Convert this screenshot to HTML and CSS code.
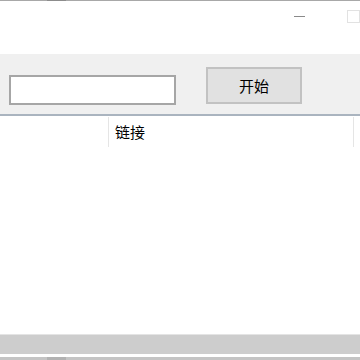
FILE: index.html
```html
<!DOCTYPE html>
<html>
<head>
  <title>链接</title>
  <meta name="viewport" content="width=device-width, initial-scale=1.0">
  <link rel="stylesheet" href="styles.css">
</head>
<body>
  <div class="edge-bar">
    <div class="edge-thumb"></div>
  </div>

  <div class="titlebar">
    <div class="win-min"></div>
    <div class="win-max"></div>
  </div>

  <div class="toolbar">
    <input type="text" class="url-input">
    <button class="start-btn">开始</button>
  </div>

  <div class="list">
    <div class="list-header">
      <div class="col col-first"></div>
      <div class="col col-link">链接</div>
      <div class="col col-last"></div>
    </div>
    <div class="list-body"></div>
  </div>

  <div class="hscroll"></div>
  <div class="gap"></div>
  <div class="edge-bar bottom">
    <div class="edge-thumb"></div>
  </div>
</body>
</html>
```

FILE: styles.css
```css
html, body {
  margin: 0;
  padding: 0;
}

body {
  width: 360px;
  height: 360px;
  overflow: hidden;
  background: #ffffff;
  color: #000000;
  font-family: 'Noto Sans CJK SC', 'Noto Sans', sans-serif;
  display: flex;
  flex-direction: column;
}

.edge-bar {
  height: 1px;
  background: #a8a8a8;
  flex-shrink: 0;
}

.edge-thumb {
  margin-left: 47px;
  width: 19px;
  height: 100%;
  background: #8c8c8c;
}

.edge-bar.bottom {
  height: 3px;
  background: #c4c4c4;
}

.edge-bar.bottom .edge-thumb {
  background: #b2b2b2;
}

.titlebar {
  height: 53px;
  flex-shrink: 0;
  display: flex;
  align-items: flex-start;
}

.win-min {
  margin-left: 294px;
  margin-top: 15px;
  width: 13px;
  height: 1px;
  background: #8a8a8a;
}

.win-max {
  margin-left: 42px;
  margin-top: 9px;
  width: 11px;
  height: 11px;
  border: 1px solid #e2e2e2;
  flex-shrink: 0;
}

.toolbar {
  height: 60px;
  flex-shrink: 0;
  background: #f0f0f0;
  display: flex;
  align-items: flex-start;
}

.url-input {
  box-sizing: border-box;
  margin: 21px 0 0 9px;
  width: 167px;
  height: 30px;
  border: 2px solid #a6a6a6;
  background: #ffffff;
  padding: 0;
  outline: none;
}

.start-btn {
  box-sizing: border-box;
  margin: 13px 0 0 30px;
  width: 96px;
  height: 37px;
  background: #e1e1e1;
  border: 2px solid #c2c2c2;
  border-radius: 0;
  font-family: inherit;
  font-size: 15px;
  color: #000000;
  padding: 0;
}

.list {
  flex: 1;
  display: flex;
  flex-direction: column;
  border-top: 2px solid #aab4bf;
}

.list-header {
  height: 30px;
  display: flex;
}

.col {
  box-sizing: border-box;
  height: 30px;
  border-right: 1px solid #e5e5e5;
  font-size: 15px;
  line-height: 30px;
}

.col-first {
  width: 109px;
  margin-top: 1px;
}

.col-link {
  width: 245px;
  padding-left: 6px;
  margin-top: 1px;
}

.col-last {
  flex: 1;
  border-right: none;
}

.list-body {
  flex: 1;
}

.hscroll {
  height: 19px;
  flex-shrink: 0;
  background: #cdcdcd;
  border-top: 1px solid #e4e4e4;
}

.gap {
  height: 3px;
  flex-shrink: 0;
}
```
